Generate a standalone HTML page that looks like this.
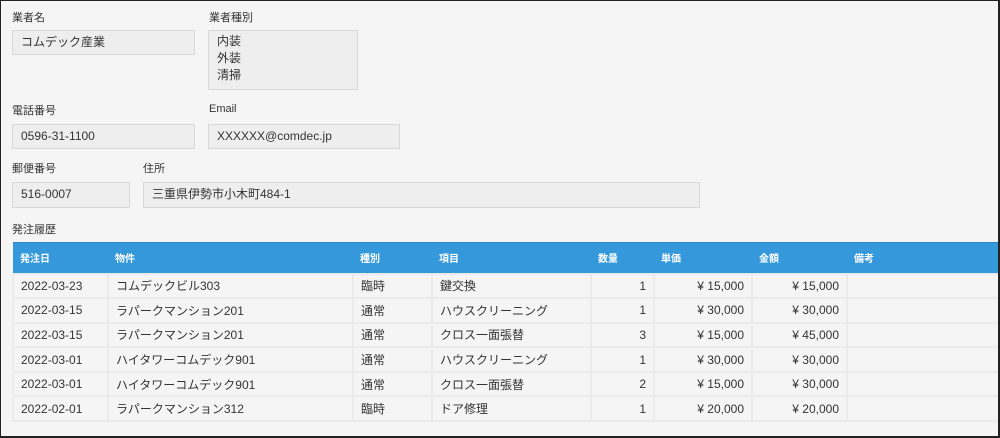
<!DOCTYPE html>
<html><head><meta charset="utf-8"><style>
*{margin:0;padding:0;box-sizing:border-box}
body{width:1000px;height:438px;background:#f5f5f5;font-family:"Liberation Sans","Noto Sans CJK JP",sans-serif;color:#333;position:relative;overflow:hidden}
.frame{position:absolute;left:0;top:0;width:1000px;height:438px;border:1px solid #222;border-right:2px solid #222;border-bottom:2px solid #222}
.l{position:absolute;font-size:11px;color:#333}
.b{position:absolute;background:#eeeeee;border:1px solid #d8d8d8;font-size:12px;padding:3px 0 0 8px;line-height:17px}
table{position:absolute;left:12px;top:242px;border-collapse:collapse;font-size:12px;width:988px;table-layout:fixed}
th{background:#3498db;color:#fff;font-size:10px;font-weight:bold;text-align:left;height:31px;padding-left:7px;border-top:1px solid #2a88c8}
td{height:24.6px;border:2px solid #ebebeb;padding:0 7px;white-space:nowrap;background:#f5f5f5}
td.r{text-align:right}
</style></head><body>
<div class="l" style="left:12px;top:9px">業者名</div>
<div class="b" style="left:12px;top:30px;width:183px;height:25px">コムデック産業</div>
<div class="l" style="left:209px;top:9px">業者種別</div>
<div class="b" style="left:208px;top:30px;width:150px;height:60px;padding-top:2px">内装<br>外装<br>清掃</div>
<div class="l" style="left:12px;top:102px">電話番号</div>
<div class="b" style="left:12px;top:124px;width:183px;height:25px">0596-31-1100</div>
<div class="l" style="left:209px;top:103px">Email</div>
<div class="b" style="left:208px;top:124px;width:192px;height:25px">XXXXXX@comdec.jp</div>
<div class="l" style="left:12px;top:160px">郵便番号</div>
<div class="b" style="left:12px;top:182px;width:118px;height:26px">516-0007</div>
<div class="l" style="left:143px;top:160px">住所</div>
<div class="b" style="left:143px;top:182px;width:557px;height:26px">三重県伊勢市小木町484-1</div>
<div class="l" style="left:12px;top:221px">発注履歴</div>
<table>
<colgroup><col style="width:95px"><col style="width:245px"><col style="width:79px"><col style="width:159px"><col style="width:63px"><col style="width:98px"><col style="width:95px"><col></colgroup>
<tr><th>発注日</th><th>物件</th><th>種別</th><th>項目</th><th>数量</th><th>単価</th><th>金額</th><th>備考</th></tr>
<tr><td>2022-03-23</td><td>コムデックビル303</td><td>臨時</td><td>鍵交換</td><td class="r">1</td><td class="r">¥ 15,000</td><td class="r">¥ 15,000</td><td></td></tr>
<tr><td>2022-03-15</td><td>ラパークマンション201</td><td>通常</td><td>ハウスクリーニング</td><td class="r">1</td><td class="r">¥ 30,000</td><td class="r">¥ 30,000</td><td></td></tr>
<tr><td>2022-03-15</td><td>ラパークマンション201</td><td>通常</td><td>クロス一面張替</td><td class="r">3</td><td class="r">¥ 15,000</td><td class="r">¥ 45,000</td><td></td></tr>
<tr><td>2022-03-01</td><td>ハイタワーコムデック901</td><td>通常</td><td>ハウスクリーニング</td><td class="r">1</td><td class="r">¥ 30,000</td><td class="r">¥ 30,000</td><td></td></tr>
<tr><td>2022-03-01</td><td>ハイタワーコムデック901</td><td>通常</td><td>クロス一面張替</td><td class="r">2</td><td class="r">¥ 15,000</td><td class="r">¥ 30,000</td><td></td></tr>
<tr><td>2022-02-01</td><td>ラパークマンション312</td><td>臨時</td><td>ドア修理</td><td class="r">1</td><td class="r">¥ 20,000</td><td class="r">¥ 20,000</td><td></td></tr>
</table>
<div class="frame"></div>
</body></html>
